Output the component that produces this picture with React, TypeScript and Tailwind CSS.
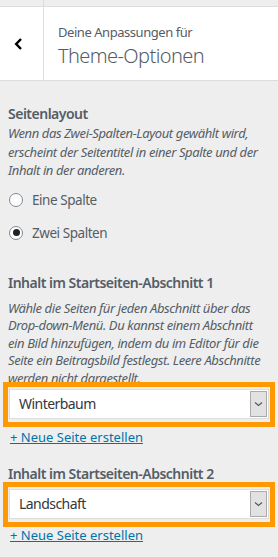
import React from "react";

function Chevron() {
  return (
    <svg width="9" height="12" viewBox="0 0 9 12" fill="none">
      <path d="M7 1 L2.2 6 L7 11" stroke="#000" strokeWidth="2.5" strokeLinecap="butt" strokeLinejoin="miter" />
    </svg>
  );
}

function Select({ value }: { value: string }) {
  return (
    <div className="mx-[3px] border-[5px] border-[#ff9900] pb-[3px] pt-[2px] px-[1px]">
      <div className="flex h-[30px] items-center border border-[#ddd] bg-white pr-[1px]">
        <span className="flex-1 pl-[9px] text-[14px] leading-[20px] tracking-[-0.55px] text-[#32373c]">{value}</span>
        <span className="flex h-[26px] w-[17px] items-center justify-center border border-[#aaa] bg-[#e2e2e2]">
          <svg width="9" height="6" viewBox="0 0 9 6" fill="none">
            <path d="M1 1.5 L4.5 4.5 L8 1.5" stroke="#555" strokeWidth="1.1" />
          </svg>
        </span>
      </div>
    </div>
  );
}

function Radio({ checked, label }: { checked?: boolean; label: string }) {
  return (
    <div className="flex h-[20px] items-center">
      <span className="ml-[9px] flex h-[14px] w-[14px] items-center justify-center rounded-full border border-[#7e8993] bg-white">
        {checked && <span className="h-[7px] w-[7px] rounded-full bg-[#222]" />}
      </span>
      <span className="ml-[9px] text-[13.5px] leading-[20px] tracking-[-0.45px] text-[#555d66]">{label}</span>
    </div>
  );
}

export default function App() {
  return (
    <div
      className="h-[557px] w-[278px] overflow-hidden bg-[#eeeeee]"
      style={{ fontFamily: '"Noto Sans", "Open Sans", sans-serif' }}
    >
      <div className="flex h-[81px] border-b border-[#ddd]">
        <div className="flex w-[44px] flex-col border-r border-[#ddd]">
          <div className="h-[7px] border-b border-[#ddd]" />
          <div className="flex flex-1 items-center bg-white pl-[14px]">
            <Chevron />
          </div>
        </div>
        <div className="flex flex-1 flex-col">
          <div className="h-[7px] border-b border-[#ddd]" />
          <div className="flex-1 bg-white pl-[14px] pt-[16px]">
            <div className="text-[13px] leading-[18px] tracking-[-0.45px] text-[#555d66]">Deine Anpassungen für</div>
            <div className="mt-[3px] text-[20px] font-light leading-[24px] tracking-[-0.6px] text-[#555d66]">Theme-Optionen</div>
          </div>
        </div>
      </div>

      <div className="pl-[8px] pt-[24px]">
        <div className="text-[14px] font-semibold leading-[18px] tracking-[-0.5px] text-[#555d66]">Seitenlayout</div>
        <div className="mt-[1px] text-[13px] italic leading-[18.5px] tracking-[-0.4px] text-[#555d66]">
          Wenn das Zwei-Spalten-Layout gewählt wird,
          <br />
          erscheint der Seitentitel in einer Spalte und der
          <br />
          Inhalt in der anderen.
        </div>
      </div>
      <div className="mt-[10px] flex flex-col gap-[13px]">
        <Radio label="Eine Spalte" />
        <Radio checked label="Zwei Spalten" />
      </div>

      <div className="pl-[8px] pt-[31px]">
        <div className="text-[14px] font-semibold leading-[18px] tracking-[-0.5px] text-[#555d66]">Inhalt im Startseiten-Abschnitt 1</div>
        <div className="mt-[8px] text-[13px] italic leading-[17.5px] tracking-[-0.4px] text-[#555d66]">
          Wähle die Seiten für jeden Abschnitt über das
          <br />
          Drop-down-Menü. Du kannst einem Abschnitt
          <br />
          ein Bild hinzufügen, indem du im Editor für die
          <br />
          Seite ein Beitragsbild festlegst. Leere Abschnitte
          <br />
          werden nicht dargestellt.
        </div>
      </div>
      <div className="relative -mt-[5px]">
        <Select value="Winterbaum" />
      </div>
      <div className="px-[10px] pt-[1px] text-[13px] leading-[18px]">
        <a href="#" className="text-[#0073aa] underline">+ Neue Seite erstellen</a>
      </div>

      <div className="pl-[8px] pt-[19px]">
        <div className="text-[14px] font-semibold leading-[18px] tracking-[-0.5px] text-[#555d66]">Inhalt im Startseiten-Abschnitt 2</div>
      </div>
      <div className="-mt-[1px]">
        <Select value="Landschaft" />
      </div>
      <div className="-mt-[1px] px-[10px] text-[13px] leading-[18px]">
        <a href="#" className="text-[#0073aa] underline">+ Neue Seite erstellen</a>
      </div>
    </div>
  );
}
